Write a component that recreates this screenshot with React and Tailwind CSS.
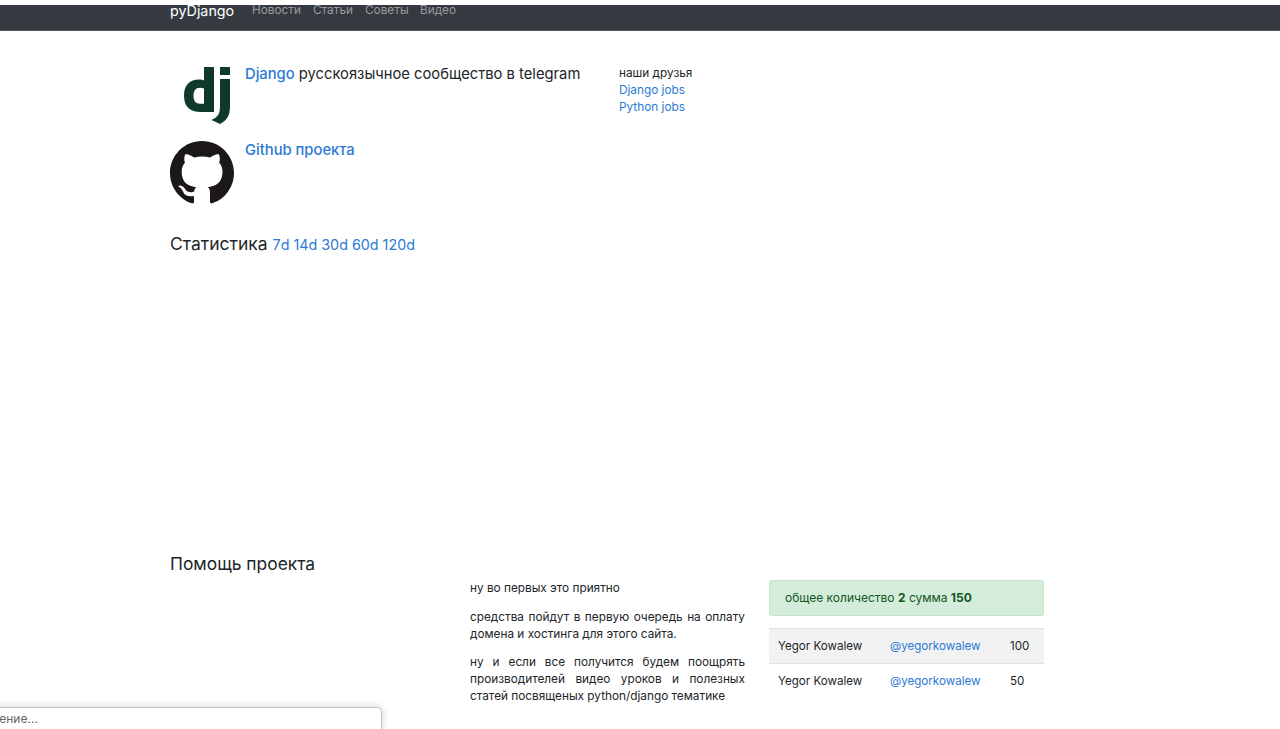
import React from "react";

const NAV_LINKS = [
  { label: "Новости", className: "w-[61px]" },
  { label: "Статьи", className: "w-[52px]" },
  { label: "Советы", className: "w-[55px]" },
  { label: "Видео", className: "" },
];

const DONATIONS = [
  { name: "Yegor Kowalew", handle: "@yegorkowalew", amount: 100, striped: true },
  { name: "Yegor Kowalew", handle: "@yegorkowalew", amount: 50, striped: false },
];

function DjangoLogo() {
  return (
    <svg viewBox="0 0 64 64" className="h-16 w-16 shrink-0" aria-hidden>
      <path
        fill="#0f3a2a"
        fillRule="evenodd"
        d="M34 3h10v45H31c-11 0-17-5-17-16.500C14 21 20 15.500 29 15.500c2 0 3.500.2 5 .7V3zm0 21.500c-1.200-.5-2.500-.7-4-.7-4.500 0-6.500 3-6.500 8 0 5.200 2.200 8 6.500 8h4V24.500z"
      />
      <path fill="#0f3a2a" d="M50 3h10v8H50zM50 15h10v27c0 10-3 14-10 18l-8.500-4c6.500-3 8.500-6 8.500-14V15z" />
    </svg>
  );
}

function GithubLogo() {
  return (
    <svg viewBox="0 0 16 16" className="h-16 w-16 shrink-0" aria-hidden>
      <path
        fill="#1b1817"
        d="M8 0C3.580 0 0 3.580 0 8c0 3.540 2.290 6.530 5.470 7.590.4.070.55-.17.55-.38 0-.19-.01-.82-.01-1.490-2.010.37-2.530-.49-2.690-.94-.09-.23-.48-.94-.82-1.130-.28-.15-.68-.52-.01-.53.63-.01 1.080.58 1.230.82.72 1.210 1.870.87 2.330.66.07-.52.28-.87.51-1.070-1.780-.2-3.640-.89-3.640-3.950 0-.87.31-1.590.82-2.150-.08-.2-.36-1.020.08-2.120 0 0 .67-.21 2.200.82.64-.18 1.320-.27 2-.27.68 0 1.360.09 2 .27 1.530-1.040 2.200-.82 2.200-.82.44 1.100.16 1.920.08 2.120.51.56.82 1.270.82 2.150 0 3.070-1.870 3.750-3.650 3.950.29.25.54.73.54 1.480 0 1.070-.01 1.930-.01 2.200 0 .21.15.46.55.38A8.013 8.013 0 0016 8c0-4.420-3.580-8-8-8z"
      />
    </svg>
  );
}

export default function App() {
  return (
    <div className="relative h-[729px] overflow-hidden bg-white font-['Inter',sans-serif] text-[#212529]">
      <nav className="mt-[5px] flex h-[26px] items-start border-b border-[#55595e] bg-[#343a40] pl-[170px]">
        <a className="mr-[18px] w-[64px] whitespace-nowrap text-[14.300px] leading-[12px] text-white">pyDjango</a>
        {NAV_LINKS.map((link) => (
          <a key={link.label} className={`text-[11.800px] leading-[10px] text-[#999c9f] ${link.className}`}>
            {link.label}
          </a>
        ))}
      </nav>

      <main className="pl-[170px]">
        <div className="flex pt-[33px]">
          <div className="w-[449px]">
            <div className="flex">
              <DjangoLogo />
              <p className="ml-[11px] text-[14.750px] leading-[20px]">
                <a className="font-[450] text-[#2a7ad3]">Django</a> русскоязычное сообщество в telegram
              </p>
            </div>
            <div className="mt-[13px] flex">
              <GithubLogo />
              <p className="ml-[11px] text-[14.750px] leading-[18px]">
                <a className="font-[450] text-[#2a7ad3]">Github проекта</a>
              </p>
            </div>
          </div>
          <div className="pt-[1px] text-[11.800px] leading-[17px]">
            <div>наши друзья</div>
            <a className="block text-[#2a7ad3]">Django jobs</a>
            <a className="block text-[#2a7ad3]">Python jobs</a>
          </div>
        </div>

        <h2 className="mt-[28px] text-[17.500px] leading-[22px]">
          Статистика{" "}
          <span className="text-[14.300px] text-[#2a7ad3]">
            <a>7d</a> <a>14d</a> <a>30d</a> <a>60d</a> <a>120d</a>
          </span>
        </h2>

        {/* блок графика, в скрине пустой */}
        <div className="h-[298px]" />

        <h2 className="text-[17.400px] leading-[20px]">Помощь проекта</h2>

        <div className="mt-[6px] flex">
          <div className="w-[300px]" />
          <div className="w-[275px] text-[11.800px] leading-[17px]">
            <p className="mb-[12px]">ну во первых это приятно</p>
            <p className="mb-[11px] text-justify">
              средства пойдут в первую очередь на оплату домена и хостинга для этого сайта.
            </p>
            <p className="text-justify">
              ну и если все получится будем поощрять производителей видео уроков и полезных статей посвященых
              python/django тематике
            </p>
          </div>
          <div className="ml-[24px] w-[275px] text-[11.600px] leading-[17px]">
            <div className="h-[36px] rounded-[3px] border border-[#c3e6cb] bg-[#d4edda] px-[15px] py-[8px] text-[12px] text-[#155724]">
              общее количество <b>2</b> сумма <b>150</b>
            </div>
            <div className="mt-[12px]">
              {DONATIONS.map((row) => (
                <div
                  key={row.amount}
                  className={`flex h-[35px] items-center border-t border-[#dee2e6] pl-[9px] ${row.striped ? "bg-[#f2f2f2]" : ""}`}
                >
                  <span className="w-[112px]">{row.name}</span>
                  <a className="w-[120px] text-[#2a7ad3]">{row.handle}</a>
                  <span>{row.amount}</span>
                </div>
              ))}
            </div>
          </div>
        </div>
      </main>

      {/* чат-виджет поверх страницы */}
      <div className="absolute bottom-0 left-[-20px] h-[22px] w-[402px] rounded-t-[5px] border border-b-0 border-[#c4c4c4] bg-white text-[12px] leading-[21px] text-[#666] shadow-[0_0_8px_rgba(0,0,0,0.2)]">
        <span className="ml-[-20px] block">сообщение...</span>
      </div>
    </div>
  );
}
